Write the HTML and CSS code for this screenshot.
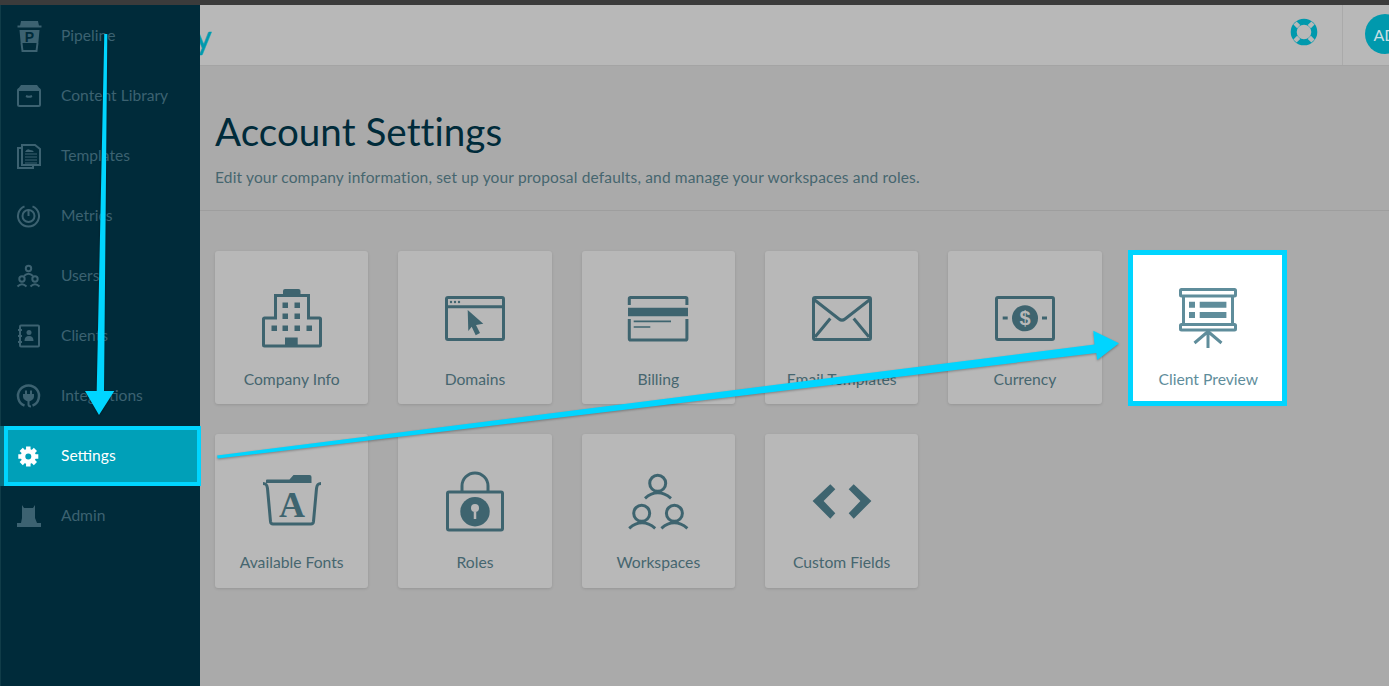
FILE: index.html
```html
<!DOCTYPE html>
<html lang="en">
<head>
<meta charset="utf-8">
<title>Account Settings</title>
<link rel="stylesheet" href="styles.css">
</head>
<body>
<div class="topbar"></div>
<div class="app">
  <nav class="sidebar">
    <a class="nav-item">
      <svg class="nav-icon" viewBox="0 0 30 36"><path class="fill" d="M7 3h17l1 5H6z"/><path class="line" d="M3.500 8.500h24"/><path class="fill" d="M5.500 12h20l-1.200 13H6.700z"/><path class="line" d="M7.500 25l1 8h14l1-8"/><text class="nav-p" x="15.500" y="24">P</text></svg>
      <span>Pipeline</span>
    </a>
    <a class="nav-item">
      <svg class="nav-icon" viewBox="0 0 30 36"><rect class="line" x="4" y="11" width="22" height="17" rx="1.500"/><path class="fill" d="M7 7h16l3 4v2H4v-2z"/><path class="line" d="M12 18q3 1.500 6 0"/></svg>
      <span>Content Library</span>
    </a>
    <a class="nav-item">
      <svg class="nav-icon" viewBox="0 0 30 36"><path class="line" d="M8 10H4v20h15v-3"/><path class="line" d="M8 7h13l5 4v16H8z"/><path class="thin" d="M11 16h12M11 19h12M11 22h12M11 25h12"/><path class="fill" d="M11 14q2-4 5-2 3 0 4 2z"/></svg>
      <span>Templates</span>
    </a>
    <a class="nav-item">
      <svg class="nav-icon" viewBox="0 0 30 36"><path class="line" d="M10.500 8.300A10.500 10.500 0 1 0 18.500 8.300"/><circle class="line" cx="14.500" cy="18" r="6"/><path class="line" d="M14.500 11v7"/></svg>
      <span>Metrics</span>
    </a>
    <a class="nav-item">
      <svg class="nav-icon" viewBox="0 0 30 36"><circle class="line" cx="14.500" cy="10.500" r="2.700"/><path class="line" d="M10 18q4.500-4.500 9 0"/><circle class="line" cx="8" cy="21" r="2.700"/><path class="line" d="M3.500 28.500q4.500-4.500 9 0"/><circle class="line" cx="21" cy="21" r="2.700"/><path class="line" d="M16.500 28.500q4.500-4.500 9 0"/></svg>
      <span>Users</span>
    </a>
    <a class="nav-item">
      <svg class="nav-icon" viewBox="0 0 30 36"><rect class="line" x="6" y="7.500" width="19" height="21" rx="1"/><path class="line" d="M4 12h4M4 18h4M4 24h4M25 11h1M25 15h1M25 19h1M25 23h1"/><circle class="fill" cx="15" cy="14.500" r="2.500"/><path class="fill" d="M10.500 23q0-5 4.500-5t4.500 5z"/></svg>
      <span>Clients</span>
    </a>
    <a class="nav-item">
      <svg class="nav-icon" viewBox="0 0 30 36"><path class="thick" d="M10.500 27.700A10.500 10.500 0 1 1 18.500 27.700"/><path class="fill" d="M9 16h2v-3.500h2V16h3v-3.500h2V16h2v2.500q0 3.500-5.500 5-5.500-1.500-5.500-5z"/><path class="line" d="M14.500 23v3.500q0 2 2.500 2"/></svg>
      <span>Integrations</span>
    </a>
    <a class="nav-item active">
      <svg class="nav-icon gear" viewBox="0 0 30 36"><path class="gear-ring" d="M14.300 8.500v4M14.300 24.500v4M4.300 18.500h4M20.300 18.500h4M7.200 11.400l2.900 2.900M18.500 22.700l2.900 2.900M21.400 11.400l-2.900 2.900M10.100 22.700l-2.900 2.900"/><circle class="gear-hub" cx="14.300" cy="18.500" r="5.300"/></svg>
      <span>Settings</span>
    </a>
    <a class="nav-item">
      <svg class="nav-icon" viewBox="0 0 30 36"><path class="fill" d="M8 7l2 3h9l2-3v13l2 5h4v4H3v-4h4l1-5z"/></svg>
      <span>Admin</span>
    </a>
  </nav>

  <div class="main">
    <header class="header">
      <div class="logo">y</div>
      <div class="header-tools">
        <svg class="help" viewBox="0 0 28 28"><circle class="help-ring" cx="14" cy="14" r="10.300"/><path class="help-bands" d="M8.700 8.700L5 5M19.300 8.700L23 5M8.700 19.300L5 23M19.300 19.300L23 23"/></svg>
        <div class="tools-divider"></div>
        <div class="avatar">AD</div>
      </div>
    </header>

    <section class="intro">
      <h1>Account Settings</h1>
      <p>Edit your company information, set up your proposal defaults, and manage your workspaces and roles.</p>
    </section>

    <section class="cards">
      <a class="card">
        <svg class="card-icon" viewBox="0 0 60 60">
          <path class="s" d="M13.500 30V7.500h33V30h11a1 1 0 0 1 1 1v26a1 1 0 0 1-1 1H2.500a1 1 0 0 1-1-1V31a1 1 0 0 1 1-1z"/>
          <path class="f" d="M21 6V3q0-2 2-2h13.500q2 0 2 2v3zM23 49.500h12.700V59H23z"/>
          <path class="f" d="M20.500 14.500h5.500v5.500h-5.500zM32.500 14.500h5.500v5.500h-5.500zM20.500 25.500h5.500v5.500h-5.500zM32.500 25.500h5.500v5.500h-5.500zM9.500 37.500h5.500v5.500H9.500zM20.500 37.500h5.500v5.500h-5.500zM32.500 37.500h5.500v5.500h-5.500zM44.500 37.500h5.500v5.500h-5.500z"/>
        </svg>
        <span>Company Info</span>
      </a>
      <a class="card">
        <svg class="card-icon" viewBox="0 0 60 60">
          <rect class="s" x="1.500" y="9.500" width="57" height="42" rx="1.500"/>
          <path class="s" d="M1.500 18.700h57"/>
          <circle class="f" cx="6" cy="14" r="1.200"/><circle class="f" cx="10" cy="14" r="1.200"/><circle class="f" cx="14" cy="14" r="1.200"/>
          <path class="f" d="M22.700 22l15.600 13.700-7.300 1.300 4 8-4.300 2.300-4-8.600-3.400 4.300z"/>
        </svg>
        <span>Domains</span>
      </a>
      <a class="card">
        <svg class="card-icon" viewBox="0 0 60 60">
          <path class="s" d="M1.300 17V10.800q0-1.300 1.300-1.300h55q1.300 0 1.300 1.300V17M1.300 31v19.700q0 1.300 1.300 1.300h55q1.300 0 1.300-1.300V31"/>
          <path class="f" d="M0 19.700h60v8.600H0z"/>
          <path class="t" d="M5.700 33.300H43M5.700 39h16.600"/>
        </svg>
        <span>Billing</span>
      </a>
      <a class="card">
        <svg class="card-icon" viewBox="0 0 60 60">
          <rect class="s" x="1.500" y="9.500" width="57" height="42" rx="1.500"/>
          <path class="s" d="M2 11.500l25 19.500q3 2.300 6 0l25-19.500M18.300 30.500L3 49M41.700 30.500L57 49"/>
        </svg>
        <span>Email Templates</span>
      </a>
      <a class="card">
        <svg class="card-icon" viewBox="0 0 60 60">
          <rect class="s" x="1.500" y="9.500" width="57" height="42" rx="1.500"/>
          <circle class="f" cx="30" cy="30.300" r="13"/>
          <path class="s" d="M7.700 30h5M47 30h5"/>
          <text class="dollar" x="30" y="37">$</text>
        </svg>
        <span>Currency</span>
      </a>
      <a class="card highlighted">
        <svg class="card-icon" viewBox="0 0 60 60">
          <rect class="s" x="2.500" y="1.500" width="55" height="6.500" rx="1"/>
          <path class="s" d="M5.500 8v28M54.500 8v28"/>
          <rect class="s" x="2.500" y="36.500" width="55" height="5.500" rx="1"/>
          <path class="s" d="M30 43v17M30 43.500L16.500 55M30 43.500L43.500 55"/>
          <path class="f" d="M11 13.700h6v6h-6zM11 24h6v6h-6zM21.700 13.700h26.700v6H21.700zM21.700 24h26.700v6H21.700z"/>
        </svg>
        <span>Client Preview</span>
      </a>
      <a class="card">
        <svg class="card-icon" viewBox="0 0 60 60">
          <path class="f" d="M4 12V9.500q0-1 1-1h22.500l4-4.500h16q2 0 2 2v6z"/>
          <path class="s" d="M1 12.500c3 0 4 1 4.500 5l3 33q.3 2.500 2.500 2.500h38q2.200 0 2.500-2.500l3-33c.500-4 1.500-5 4.500-5"/>
          <text class="folder-a" x="30" y="45.500">A</text>
        </svg>
        <span>Available Fonts</span>
      </a>
      <a class="card">
        <svg class="card-icon" viewBox="0 0 60 60">
          <rect class="s" x="2.500" y="21" width="55" height="38" rx="1.500"/>
          <path class="s" d="M17 21v-6a13 13 0 0 1 26 0v6"/>
          <circle class="f" cx="30" cy="40.700" r="14.700"/>
          <path class="hole" d="M30 41v7"/><circle class="hole-dot" cx="30" cy="37" r="4"/>
        </svg>
        <span>Roles</span>
      </a>
      <a class="card">
        <svg class="card-icon" viewBox="0 0 60 60">
          <circle class="s" cx="29.700" cy="12.300" r="8"/><path class="s" d="M17 27.300q12.700-11 26 0"/>
          <circle class="s" cx="13.700" cy="42.300" r="8"/><path class="s" d="M1.200 57.300q12.700-11 26 0"/>
          <circle class="s" cx="46.400" cy="42.300" r="8"/><path class="s" d="M33.400 57.300q12.700-11 26 0"/>
        </svg>
        <span>Workspaces</span>
      </a>
      <a class="card">
        <svg class="card-icon" viewBox="0 0 60 60">
          <path class="f" d="M.6 30L18.300 13.300l5 5L11.600 30l11.700 12.300-5 5.400zM59.400 30L41.700 13.300l-5 5L48.400 30 36.700 42.300l5 5.400z"/>
        </svg>
        <span>Custom Fields</span>
      </a>
    </section>
  </div>
</div>

<svg class="annotations" viewBox="0 0 1389 686">
  <path class="arrow" d="M104.300 34h3L104 391h10.300L99 415 85 391h11.700z"/>
  <path class="arrow" d="M217 455.500l877.500-111-1.200-13.800L1119 343.300 1097.300 360l-1-7-878.500 105.500z"/>
</svg>
</body>
</html>
```

FILE: styles.css
```css
* { box-sizing: border-box; }
html, body { margin: 0; height: 686px; overflow: hidden; }
body {
  position: relative;
  background: #aaaaaa;
  font-family: Lato, "Liberation Sans", sans-serif;
}
.topbar { height: 5px; background: #3b3b3b; }
.app { display: flex; height: 681px; }

.sidebar {
  position: relative;
  z-index: 2;
  flex: 0 0 200px;
  padding-top: 1px;
  background: #002b3a;
  border-left: 1px solid #103c48;
}
.nav-item {
  position: relative;
  display: flex;
  align-items: center;
  height: 60px;
  margin-left: -1px;
  padding-left: 14px;
  color: #3c6271;
  font-size: 15.6px;
}
.nav-item span { padding-bottom: 2px; }
.nav-icon { flex: 0 0 30px; width: 30px; height: 36px; margin-right: 17px; overflow: visible; }
.nav-icon .fill { fill: #3c6271; }
.nav-icon .line { fill: none; stroke: #3c6271; stroke-width: 2; }
.nav-icon .thin { fill: none; stroke: #3c6271; stroke-width: 1; }
.nav-icon .thick { fill: none; stroke: #3c6271; stroke-width: 2.500; }
.nav-p { fill: #002b3a; font: 700 14px "Liberation Sans", sans-serif; text-anchor: middle; }
.nav-item.active {
  background: #00a0b8;
  color: #ffffff;
  box-shadow: inset 4px 0 0 #0b6f80;
}
.nav-item.active::after {
  content: "";
  position: absolute;
  top: 0;
  bottom: 0;
  left: 4px;
  right: -1px;
  border: 4px solid #00d5ff;
}
.gear-ring { fill: none; stroke: #ffffff; stroke-width: 4.500; }
.gear-hub { fill: none; stroke: #ffffff; stroke-width: 4.600; }

.main { flex: 1; min-width: 0; }
.header {
  display: flex;
  justify-content: space-between;
  height: 61px;
  background: #b8b8b8;
  border-bottom: 1px solid #a4a4a4;
}
.logo {
  margin-left: -5px;
  padding-top: 14px;
  color: #0099ad;
  font-size: 32px;
  line-height: 36px;
  -webkit-text-stroke: .5px #0099ad;
}
.header-tools { display: flex; align-items: flex-start; }
.help { width: 28px; height: 28px; margin: 13px 24px 0 0; }
.help-ring { fill: none; stroke: #0099ad; stroke-width: 6; }
.help-bands { fill: none; stroke: #b8b8b8; stroke-width: 4.500; }
.tools-divider { width: 1px; height: 60px; background: #aaaaaa; }
.avatar {
  display: flex;
  flex: 0 0 40px;
  align-items: center;
  justify-content: center;
  width: 40px;
  height: 40px;
  margin: 9px -16px 0 22px;
  border-radius: 50%;
  background: #0099ad;
  color: #c6dfe3;
  font-size: 16px;
}

.intro {
  height: 145px;
  padding: 43px 0 0 15px;
  border-bottom: 1px solid #9e9e9e;
}
.intro h1 {
  margin: 0;
  color: #002b3a;
  font-size: 38.6px;
  font-weight: 400;
  line-height: 44px;
  letter-spacing: .05px;
}
.intro p {
  margin: 14px 0 0;
  color: #46666f;
  font-size: 15.5px;
  line-height: 20px;
  letter-spacing: .16px;
}

.cards {
  display: grid;
  grid-template-columns: repeat(6, 153.33px);
  grid-auto-rows: 153.33px;
  gap: 30px;
  padding: 40px 0 0 15px;
}
.card {
  position: relative;
  display: flex;
  flex-direction: column;
  align-items: center;
  padding-top: 37px;
  background: #b8b8b8;
  border-radius: 3px;
  box-shadow: 0 1px 3px rgba(0, 0, 0, .12);
  color: #46666f;
  font-size: 15.7px;
}
.card span { margin-top: 21px; line-height: 20px; }
.card-icon { width: 60px; height: 60px; color: #3e646f; overflow: visible; }
.card-icon .f { fill: currentColor; }
.card-icon .s { fill: none; stroke: currentColor; stroke-width: 3; }
.card-icon .t { fill: none; stroke: currentColor; stroke-width: 1.700; }
.dollar { fill: #b8b8b8; font: 700 20px "Liberation Sans", sans-serif; text-anchor: middle; }
.folder-a { fill: currentColor; font: 700 36px "Liberation Serif", serif; text-anchor: middle; }
.hole { fill: none; stroke: #b8b8b8; stroke-width: 2.500; }
.hole-dot { fill: #b8b8b8; }
.card.highlighted { background: #ffffff; color: #5f8d9b; }
.card.highlighted .card-icon { color: #5f8d9b; }
.card.highlighted::after {
  content: "";
  position: absolute;
  top: -1px;
  bottom: -2px;
  left: -4px;
  right: -2px;
  border: 5px solid #00d5ff;
}

.annotations {
  position: absolute;
  z-index: 3;
  top: 0;
  left: 0;
  width: 1389px;
  height: 686px;
  pointer-events: none;
}
.arrow { fill: #00d5ff; filter: drop-shadow(0 1px 1px rgba(0, 0, 0, .3)); }
```
